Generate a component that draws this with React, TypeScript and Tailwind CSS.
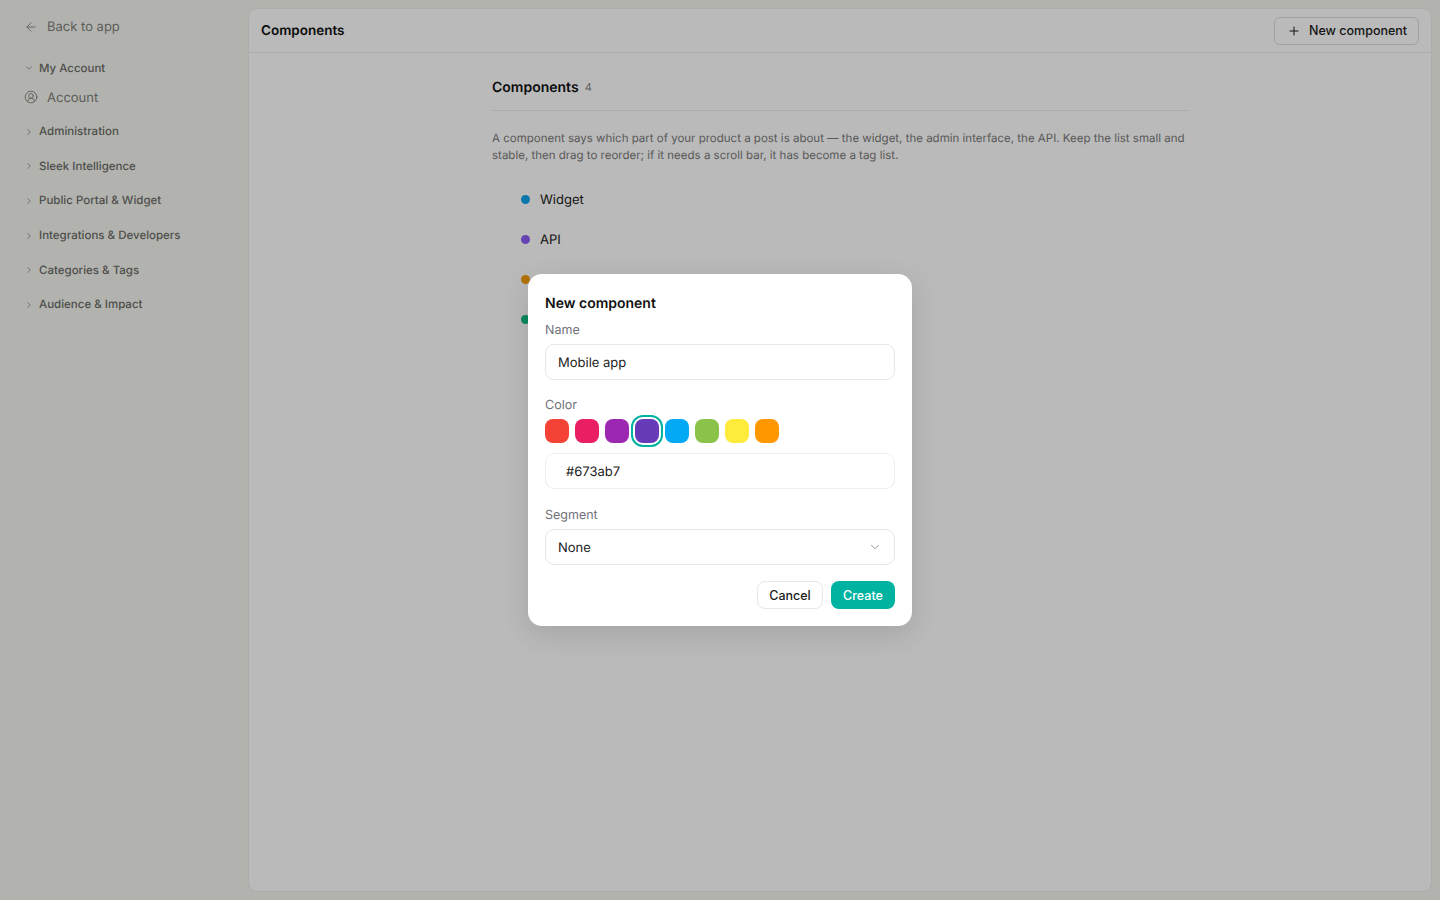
import { ArrowLeft, ChevronDown, ChevronRight, CircleUserRound, Plus } from "lucide-react";

const sections = [
  "Administration",
  "Sleek Intelligence",
  "Public Portal & Widget",
  "Integrations & Developers",
  "Categories & Tags",
  "Audience & Impact",
];

const components = [
  { name: "Widget", color: "bg-[#0ea5e9]" },
  { name: "API", color: "bg-[#8b5cf6]" },
  { name: "Admin", color: "bg-[#f59e0b]" },
  { name: "Mobile", color: "bg-[#10b981]" },
];

const swatches = [
  "bg-[#f44336]",
  "bg-[#e91e63]",
  "bg-[#9c27b0]",
  "bg-[#673ab7]",
  "bg-[#03a9f4]",
  "bg-[#8bc34a]",
  "bg-[#ffeb3b]",
  "bg-[#ff9800]",
];

function Sidebar() {
  return (
    <aside className="w-[249px] shrink-0 pl-6 pt-[17px] text-[#6b6c6a]">
      <div className="flex h-[19px] items-center gap-[9px] text-[13px] text-[#80817d]">
        <ArrowLeft className="h-[14px] w-[14px]" strokeWidth={1.5} />
        <span className="pt-[2px]">Back to app</span>
      </div>
      <div className="mt-[22px] flex h-[20px] items-center gap-[5px] text-[11.5px] font-medium">
        <ChevronDown className="h-[10px] w-[10px] text-[#7b7c78]" strokeWidth={1.75} />
        <span className="pt-[2px]">My Account</span>
      </div>
      <div className="mt-[9px] flex h-[20px] items-center gap-[9px] text-[13px] text-[#80817d]">
        <CircleUserRound className="h-[14px] w-[14px]" strokeWidth={1.5} />
        <span className="pt-[4px]">Account</span>
      </div>
      <div className="mt-[7.6px]">
        {sections.map((s) => (
          <div key={s} className="flex h-[34.6px] items-center gap-[5px] text-[11.5px] font-medium">
            <ChevronRight className="h-[10px] w-[10px] text-[#7b7c78]" strokeWidth={1.75} />
            <span>{s}</span>
          </div>
        ))}
      </div>
    </aside>
  );
}

function Main() {
  return (
    <main className="my-[9px] mr-[9px] flex-1 overflow-hidden rounded-lg bg-white shadow-[0_0_2px_rgba(0,0,0,0.12)]">
      <header className="flex h-[44px] items-center justify-between border-b border-[#e9e9e7] pl-3 pr-3">
        <h1 className="pt-[2px] text-[13.5px] font-semibold text-[#111]">Components</h1>
        <button className="flex h-7 w-[145px] items-center gap-2 rounded-md border border-[#dcdcda] pl-3 text-[12.5px] font-medium text-[#1c1c1c]">
          <Plus className="h-[14px] w-[14px]" strokeWidth={1.75} />
          <span className="pt-[2px]">New component</span>
        </button>
      </header>
      <div className="ml-[243px] w-[697px]">
        <div className="flex h-[58px] items-center gap-[6px] border-b border-[#e9e9e7] pt-[11px]">
          <h2 className="pt-[2px] text-sm font-semibold text-[#111]">Components</h2>
          <span className="text-[11px] text-[#8a8a8a]">4</span>
        </div>
        <p className="mt-[19px] text-[11.5px] leading-[17px] text-[#7a7a7a]">
          A component says which part of your product a post is about — the widget, the admin interface, the API. Keep
          the list small and stable, then drag to reorder; if it needs a scroll bar, it has become a tag list.
        </p>
        <ul className="mt-[15px] pl-[29px]">
          {components.map((c) => (
            <li key={c.name} className="flex h-10 items-center gap-[10px] text-[13px] text-[#1c1c1c]">
              <span className={`h-[9px] w-[9px] rounded-full ${c.color}`} />
              <span className="pt-[4px]">{c.name}</span>
            </li>
          ))}
        </ul>
      </div>
    </main>
  );
}

function Modal() {
  return (
    <div className="absolute inset-0 flex items-center justify-center bg-black/27">
      <div className="w-[384px] rounded-[14px] bg-white px-[17px] pb-[17px] pt-[20px] shadow-[0_8px_28px_rgba(0,0,0,0.12)]">
        <h3 className="pt-[2px] text-sm font-semibold leading-[16px] text-[#111]">New component</h3>
        <label className="mt-[11px] block text-[12.5px] leading-[16px] text-[#71717a]">Name</label>
        <div className="mt-[5px] flex h-9 items-center rounded-[9px] border border-[#e7e7e7] px-3 text-[13px] text-[#1c1c1c]">
          <span className="pt-[4px]">Mobile app</span>
        </div>
        <label className="mt-[18px] block text-[12.5px] leading-[16px] text-[#71717a]">Color</label>
        <div className="mt-[5px] flex gap-[6px]">
          {swatches.map((c, i) => (
            <span
              key={c}
              className={`h-6 w-6 rounded-lg ${c} ${i === 3 ? "outline-2 outline-offset-2 outline-[#00b3a1]" : ""}`}
            />
          ))}
        </div>
        <div className="mt-[10px] flex h-9 items-center rounded-[9px] border border-[#eeeeee] pl-[20px] text-[13px] text-[#1c1c1c]">
          <span className="pt-[4px]">#673ab7</span>
        </div>
        <label className="mt-[19px] block text-[12.5px] leading-[16px] text-[#71717a]">Segment</label>
        <div className="mt-[5px] flex h-9 items-center justify-between rounded-[9px] border border-[#e7e7e7] pl-3 pr-[12px] text-[13px] text-[#1c1c1c]">
          <span className="pt-[4px]">None</span>
          <ChevronDown className="h-[14px] w-[14px] text-[#8a8a8a]" strokeWidth={1.5} />
        </div>
        <div className="mt-4 flex justify-end gap-2">
          <button className="h-7 w-[66px] rounded-lg border border-[#e7e7e7] pt-[2px] text-[12.5px] font-medium text-[#1c1c1c]">
            Cancel
          </button>
          <button className="h-7 w-[64px] rounded-lg bg-[#00b3a1] pt-[2px] text-[12.5px] font-medium text-white">Create</button>
        </div>
      </div>
    </div>
  );
}

export default function App() {
  return (
    <div className="relative flex h-[900px] w-[1440px] overflow-hidden bg-[#f5f6ef] font-['Inter',sans-serif] antialiased [text-rendering:geometricPrecision]">
      <Sidebar />
      <Main />
      <Modal />
    </div>
  );
}
